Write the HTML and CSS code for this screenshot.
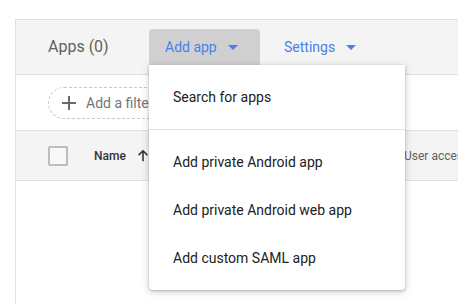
FILE: index.html
```html
<!DOCTYPE html>
<html>
<head>
<meta charset="utf-8">
<link rel="stylesheet" href="styles.css">
</head>
<body>
<div class="panel">
  <div class="toolbar">
    <div class="title">Apps (0)</div>
    <div class="menu-anchor">
      <button class="tbtn active">Add app<svg class="caret" width="24" height="24" viewBox="0 0 24 24"><path d="M7 10l5 5 5-5z"/></svg></button>
      <div class="menu">
        <div class="item">Search for apps</div>
        <div class="divider"></div>
        <div class="item">Add private Android app</div>
        <div class="item">Add private Android web app</div>
        <div class="item">Add custom SAML app</div>
      </div>
    </div>
    <button class="tbtn">Settings<svg class="caret" width="24" height="24" viewBox="0 0 24 24"><path d="M7 10l5 5 5-5z"/></svg></button>
  </div>
  <div class="filters">
    <div class="chip"><svg class="plus" width="14" height="14" viewBox="0 0 14 14"><path d="M7 0v14M0 7h14"/></svg>Add a filter</div>
  </div>
  <div class="thead">
    <div class="checkbox"></div>
    <div class="col-name">Name<svg class="sort" width="14" height="14" viewBox="0 0 16 16"><path d="M8 2v12M3 7l5-5 5 5"/></svg></div>
    <div class="col-access">User access</div>
  </div>
</div>
</body>
</html>
```
FILE: styles.css
```css
html {
  overflow: hidden;
}
body {
  margin: 0;
  padding: 0;
  background: #fff;
  font-family: Roboto, "Liberation Sans", sans-serif;
}
.panel {
  margin: 19px 0 0 15px;
  height: calc(100vh - 19px);
  box-sizing: border-box;
  border-top: 1px solid #e0e0e0;
  border-left: 1px solid #e0e0e0;
}
.toolbar {
  height: 55px;
  box-sizing: border-box;
  padding: 9px 0 10px 32px;
  background: #f4f4f4;
  border-bottom: 1px solid #e0e0e0;
  display: flex;
  align-items: center;
}
.title {
  font-size: 16px;
  color: #616161;
  width: 101px;
  flex: none;
}
.menu-anchor {
  position: relative;
  margin-right: 8px;
}
.tbtn {
  display: flex;
  align-items: center;
  height: 36px;
  padding: 0 15px 0 16px;
  border: 0;
  border-radius: 4px 4px 0 0;
  background: transparent;
  font-family: Roboto, "Liberation Sans", sans-serif;
  font-size: 14px;
  color: #4a80e8;
  gap: 4px;
}
.tbtn.active {
  background: #d0d0d0;
  width: 111px;
}
.caret {
  fill: #4a80e8;
}
.menu {
  position: absolute;
  top: 36px;
  left: 0;
  width: 256px;
  background: #fff;
  padding: 8px 0;
  border-radius: 0 0 4px 4px;
  box-shadow: 0 1px 3px rgba(0,0,0,0.25), 0 2px 8px 1px rgba(0,0,0,0.12);
  z-index: 5;
}
.item {
  height: 48px;
  display: flex;
  align-items: center;
  padding-left: 24px;
  font-size: 14px;
  color: #212121;
}
.divider {
  height: 1px;
  background: #e0e0e0;
  margin: 8px 0;
}
.filters {
  height: 55px;
  box-sizing: border-box;
  padding: 12px 0 0 32px;
}
.chip {
  display: inline-flex;
  align-items: center;
  height: 32px;
  box-sizing: border-box;
  border: 1px dashed #c8c8c8;
  border-radius: 16px;
  padding: 0 14px 0 13px;
  font-size: 14px;
  color: #757575;
  gap: 10px;
}
.plus {
  stroke: #6b6b6b;
  stroke-width: 2;
  fill: none;
}
.thead {
  height: 51px;
  box-sizing: border-box;
  border-top: 1px solid #e0e0e0;
  border-bottom: 1px solid #e0e0e0;
  background: #f4f4f4;
  display: flex;
  align-items: center;
  padding-left: 32px;
  white-space: nowrap;
  overflow: hidden;
}
.checkbox {
  width: 20px;
  height: 20px;
  box-sizing: border-box;
  border: 2px solid #bdbdbd;
  border-radius: 2px;
  background: #f8f8f8;
  flex: none;
}
.col-name {
  margin-left: 26px;
  width: 310px;
  flex: none;
  display: flex;
  align-items: center;
  gap: 10px;
  font-size: 12px;
  font-weight: 500;
  color: #333;
}
.sort {
  stroke: #333;
  stroke-width: 1.8;
  fill: none;
}
.col-access {
  font-size: 12px;
  color: #616161;
}
```
